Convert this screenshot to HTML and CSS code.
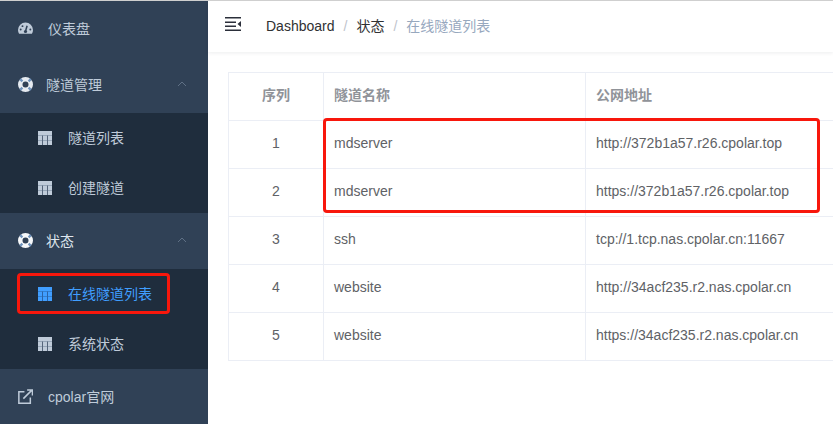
FILE: index.html
```html
<!DOCTYPE html>
<html lang="zh">
<head>
<meta charset="utf-8">
<title>在线隧道列表</title>
<link rel="stylesheet" href="styles.css">
</head>
<body>
<div class="app">
  <aside class="sidebar">
    <a class="menu-item first">
      <svg class="icon" viewBox="0 0 14 14"><path d="M7 1.500A7 7 0 0 0 0 8.500c0 1.300.4 2.500 1 3.500h12c.6-1 1-2.200 1-3.500a7 7 0 0 0-7-7z" fill="#bfcbd9"/><path d="M7 9.500 8.500 4.500" stroke="#304156" stroke-width="1.400"/><circle cx="7" cy="9.800" r="1.500" fill="#304156"/><circle cx="2.500" cy="8" r=".9" fill="#304156"/><circle cx="4.200" cy="4.800" r=".9" fill="#304156"/><circle cx="11.500" cy="8" r=".9" fill="#304156"/></svg>
      <span class="label">仪表盘</span>
    </a>
    <div class="menu-head">
      <svg class="icon" viewBox="0 0 16 16"><circle cx="8" cy="8" r="5.600" fill="none" stroke="#e6ebf1" stroke-width="4.800"/><path d="M2.300 2.300 4.700 4.700M13.700 2.300 11.300 4.700M2.300 13.700 4.700 11.300M13.700 13.700 11.300 11.300" stroke="#6f93bd" stroke-width="2.400"/></svg>
      <span class="label tight">隧道管理</span>
      <svg class="chev" viewBox="0 0 10 6"><path d="M1 5 5 1l4 4" fill="none" stroke="#5f7085" stroke-width="1"/></svg>
    </div>
    <div class="submenu">
      <a class="sub-item"><svg class="grid" viewBox="0 0 14 14"><path d="M0 0h14v14H0z" fill="#bfcbd9"/><path d="M0 4.500h14M0 9.500h14" stroke="#8a9aae" stroke-width=".8"/><path d="M4.500 4.500V14M9.500 4.500V14" stroke="#55657a" stroke-width="1"/></svg><span class="label">隧道列表</span></a>
      <a class="sub-item"><svg class="grid" viewBox="0 0 14 14"><path d="M0 0h14v14H0z" fill="#bfcbd9"/><path d="M0 4.500h14M0 9.500h14" stroke="#8a9aae" stroke-width=".8"/><path d="M4.500 4.500V14M9.500 4.500V14" stroke="#55657a" stroke-width="1"/></svg><span class="label">创建隧道</span></a>
    </div>
    <div class="menu-head">
      <svg class="icon" viewBox="0 0 16 16"><circle cx="8" cy="8" r="5.600" fill="none" stroke="#f6f8fa" stroke-width="4.800"/><path d="M2.300 2.300 4.700 4.700M13.700 2.300 11.300 4.700M2.300 13.700 4.700 11.300M13.700 13.700 11.300 11.300" stroke="#6f93bd" stroke-width="2.400"/></svg>
      <span class="label tight bright">状态</span>
      <svg class="chev" viewBox="0 0 10 6"><path d="M1 5 5 1l4 4" fill="none" stroke="#5f7085" stroke-width="1"/></svg>
    </div>
    <div class="submenu">
      <a class="sub-item active"><svg class="grid" viewBox="0 0 14 14"><path d="M0 0h14v14H0z" fill="#409eff"/><path d="M0 4.500h14M0 9.500h14" stroke="#2f77c4" stroke-width=".8"/><path d="M4.500 4.500V14M9.500 4.500V14" stroke="#2a62a6" stroke-width="1"/></svg><span class="label">在线隧道列表</span></a>
      <a class="sub-item"><svg class="grid" viewBox="0 0 14 14"><path d="M0 0h14v14H0z" fill="#bfcbd9"/><path d="M0 4.500h14M0 9.500h14" stroke="#8a9aae" stroke-width=".8"/><path d="M4.500 4.500V14M9.500 4.500V14" stroke="#55657a" stroke-width="1"/></svg><span class="label">系统状态</span></a>
    </div>
    <a class="menu-item">
      <svg class="icon" viewBox="0 0 14 14"><path d="M6 2.500H.8v10.700h10.700V8" fill="none" stroke="#bfcbd9" stroke-width="1.400"/><path d="M5 9 12.500 1.500M8.500 1h5v5" fill="none" stroke="#bfcbd9" stroke-width="1.400"/></svg>
      <span class="label">cpolar官网</span>
    </a>
  </aside>
  <main class="main">
    <header class="navbar">
      <svg class="hamburger" viewBox="0 0 16 14"><path d="M0 .8h16M0 5.300h11M0 9.300h11M0 13.300h16" stroke="#2b2f3a" stroke-width="1.500"/><path d="M16 4v6l-3.500-3z" fill="#2b2f3a"/></svg>
      <nav class="crumbs">
        <span class="crumb">Dashboard</span><span class="sep">/</span>
        <span class="crumb">状态</span><span class="sep">/</span>
        <span class="crumb current">在线隧道列表</span>
      </nav>
    </header>
    <section class="content">
      <table class="tunnels">
        <thead>
          <tr><th class="col-idx">序列</th><th class="col-name">隧道名称</th><th>公网地址</th></tr>
        </thead>
        <tbody>
          <tr><td class="idx">1</td><td>mdserver</td><td>http://372b1a57.r26.cpolar.top</td></tr>
          <tr><td class="idx">2</td><td>mdserver</td><td>https://372b1a57.r26.cpolar.top</td></tr>
          <tr><td class="idx">3</td><td>ssh</td><td>tcp://1.tcp.nas.cpolar.cn:11667</td></tr>
          <tr><td class="idx">4</td><td>website</td><td>http://34acf235.r2.nas.cpolar.cn</td></tr>
          <tr><td class="idx">5</td><td>website</td><td>https://34acf235.r2.nas.cpolar.cn</td></tr>
        </tbody>
      </table>
    </section>
  </main>
  <div class="mark mark-table"></div>
  <div class="mark mark-menu"></div>
</div>
</body>
</html>
```
FILE: styles.css
```css
* { box-sizing: border-box; }
html, body { margin: 0; height: 100%; overflow: hidden; }
body {
  font-family: "Liberation Sans", "Noto Sans CJK SC", sans-serif;
  font-size: 14px;
  color: #606266;
  background: #fff;
}
.app {
  position: relative;
  display: flex;
  height: 424px;
  overflow: hidden;
  border-top: 1px solid #cfcfcf;
}
.sidebar {
  flex: 0 0 208px;
  background: #304156;
  color: #bfcbd9;
  display: flex;
  flex-direction: column;
}
.menu-item, .menu-head {
  flex: 0 0 56px;
  display: flex;
  align-items: center;
  padding-left: 18px;
  padding-bottom: 2px;
  position: relative;
}
.icon { width: 15px; height: 15px; flex: none; }
.label { margin-left: 15px; white-space: nowrap; }
.tight { margin-left: 13px; }
.bright { color: #dfe6ee; }
.chev {
  width: 10px;
  height: 6px;
  position: absolute;
  left: 177px;
  top: 24px;
}
.submenu { background: #1f2d3d; }
.sub-item {
  height: 50px;
  display: flex;
  align-items: center;
  padding-left: 38px;
}
.grid { width: 14px; height: 14px; flex: none; }
.sub-item .label { margin: 0 0 2px 16px; }
.active { color: #409eff; }
.main { flex: 1; min-width: 0; display: flex; flex-direction: column; }
.navbar {
  flex: 0 0 51px;
  display: flex;
  align-items: center;
  box-shadow: 0 1px 4px rgba(0, 21, 41, .08);
}
.hamburger { width: 16px; height: 14px; margin: -5px 0 0 17px; flex: none; }
.crumbs { margin: -3px 0 0 25px; display: flex; align-items: baseline; white-space: nowrap; }
.crumb { color: #303133; }
.current { color: #97a8be; }
.sep { color: #c0c4cc; margin: 0 9px; }
.content { padding: 20px; }
.tunnels {
  width: 1000px;
  table-layout: fixed;
  border-collapse: collapse;
  border: 1px solid #ebeef5;
}
.tunnels th, .tunnels td {
  height: 48px;
  padding: 0 10px 3px;
  border: 1px solid #ebeef5;
  text-align: left;
  white-space: nowrap;
}
.tunnels th { color: #909399; font-weight: 700; padding-bottom: 6px; }
.col-idx { width: 95px; }
.col-name { width: 262px; }
.tunnels .idx { text-align: center; }
.tunnels .col-idx { text-align: center; }
.mark {
  position: absolute;
  border: 3px solid #f8170c;
  border-radius: 4px;
}
.mark-table { left: 323px; top: 117px; width: 497px; height: 95px; }
.mark-menu { left: 17px; top: 272px; width: 153px; height: 41px; }
```
